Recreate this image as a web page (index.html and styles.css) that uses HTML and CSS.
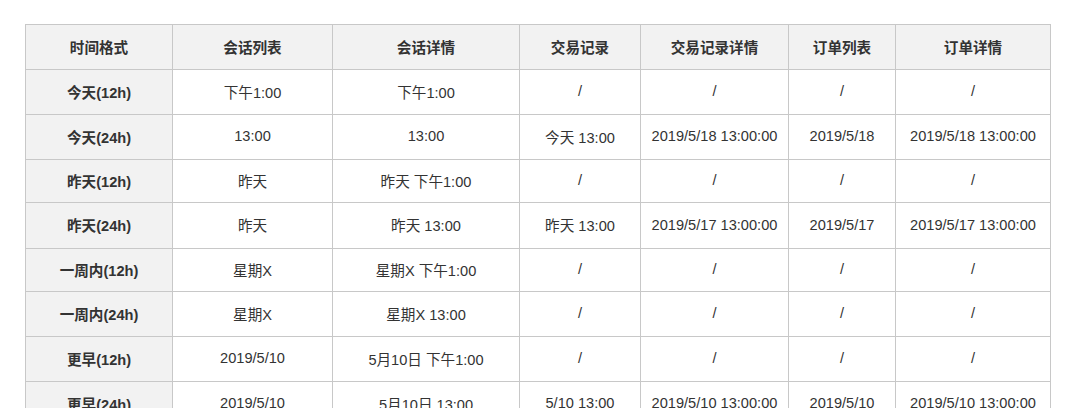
FILE: index.html
```html
<!DOCTYPE html>
<html lang="zh">
<head>
<meta charset="utf-8">
<title>时间格式</title>
<link rel="stylesheet" href="styles.css">
</head>
<body>
<table class="fmt">
  <colgroup>
    <col class="c1"><col class="c2"><col class="c3"><col class="c4"><col class="c5"><col class="c6"><col class="c7">
  </colgroup>
  <thead>
    <tr><th>时间格式</th><th>会话列表</th><th>会话详情</th><th>交易记录</th><th>交易记录详情</th><th>订单列表</th><th>订单详情</th></tr>
  </thead>
  <tbody>
    <tr><th>今天(12h)</th><td>下午1:00</td><td>下午1:00</td><td>/</td><td>/</td><td>/</td><td>/</td></tr>
    <tr><th>今天(24h)</th><td>13:00</td><td>13:00</td><td>今天 13:00</td><td>2019/5/18 13:00:00</td><td>2019/5/18</td><td>2019/5/18 13:00:00</td></tr>
    <tr><th>昨天(12h)</th><td>昨天</td><td>昨天 下午1:00</td><td>/</td><td>/</td><td>/</td><td>/</td></tr>
    <tr><th>昨天(24h)</th><td>昨天</td><td>昨天 13:00</td><td>昨天 13:00</td><td>2019/5/17 13:00:00</td><td>2019/5/17</td><td>2019/5/17 13:00:00</td></tr>
    <tr><th>一周内(12h)</th><td>星期X</td><td>星期X 下午1:00</td><td>/</td><td>/</td><td>/</td><td>/</td></tr>
    <tr><th>一周内(24h)</th><td>星期X</td><td>星期X 13:00</td><td>/</td><td>/</td><td>/</td><td>/</td></tr>
    <tr><th>更早(12h)</th><td>2019/5/10</td><td>5月10日 下午1:00</td><td>/</td><td>/</td><td>/</td><td>/</td></tr>
    <tr><th>更早(24h)</th><td>2019/5/10</td><td>5月10日 13:00</td><td>5/10 13:00</td><td>2019/5/10 13:00:00</td><td>2019/5/10</td><td>2019/5/10 13:00:00</td></tr>
  </tbody>
</table>
</body>
</html>
```

FILE: styles.css
```css
html, body {
  margin: 0;
  padding: 0;
  background: #ffffff;
}
body {
  padding: 24px 0 0 25px;
  font-family: "Liberation Sans", "Noto Sans CJK SC", sans-serif;
  font-size: 14.6px;
  color: #333333;
}
.fmt {
  table-layout: fixed;
  border-collapse: collapse;
  width: 1025px;
}
.c1 { width: 147px; }
.c2 { width: 160px; }
.c3 { width: 187px; }
.c4 { width: 121px; }
.c5 { width: 148px; }
.c6 { width: 107px; }
.c7 { width: 155px; }
.fmt th,
.fmt td {
  border: 1px solid #c8c8c8;
  text-align: center;
  vertical-align: middle;
  padding: 0 0 2px 0;
  white-space: nowrap;
}
.fmt th {
  background: #f2f2f2;
  font-weight: 600;
}
.fmt td {
  background: #ffffff;
  font-weight: normal;
}
.fmt thead tr { height: 45px; }
.fmt tbody tr { height: 45px; }
.fmt tbody tr:nth-child(3) { height: 43px; }
.fmt tbody tr:nth-child(4) { height: 46px; }
.fmt tbody tr:nth-child(5) { height: 43px; }
```
